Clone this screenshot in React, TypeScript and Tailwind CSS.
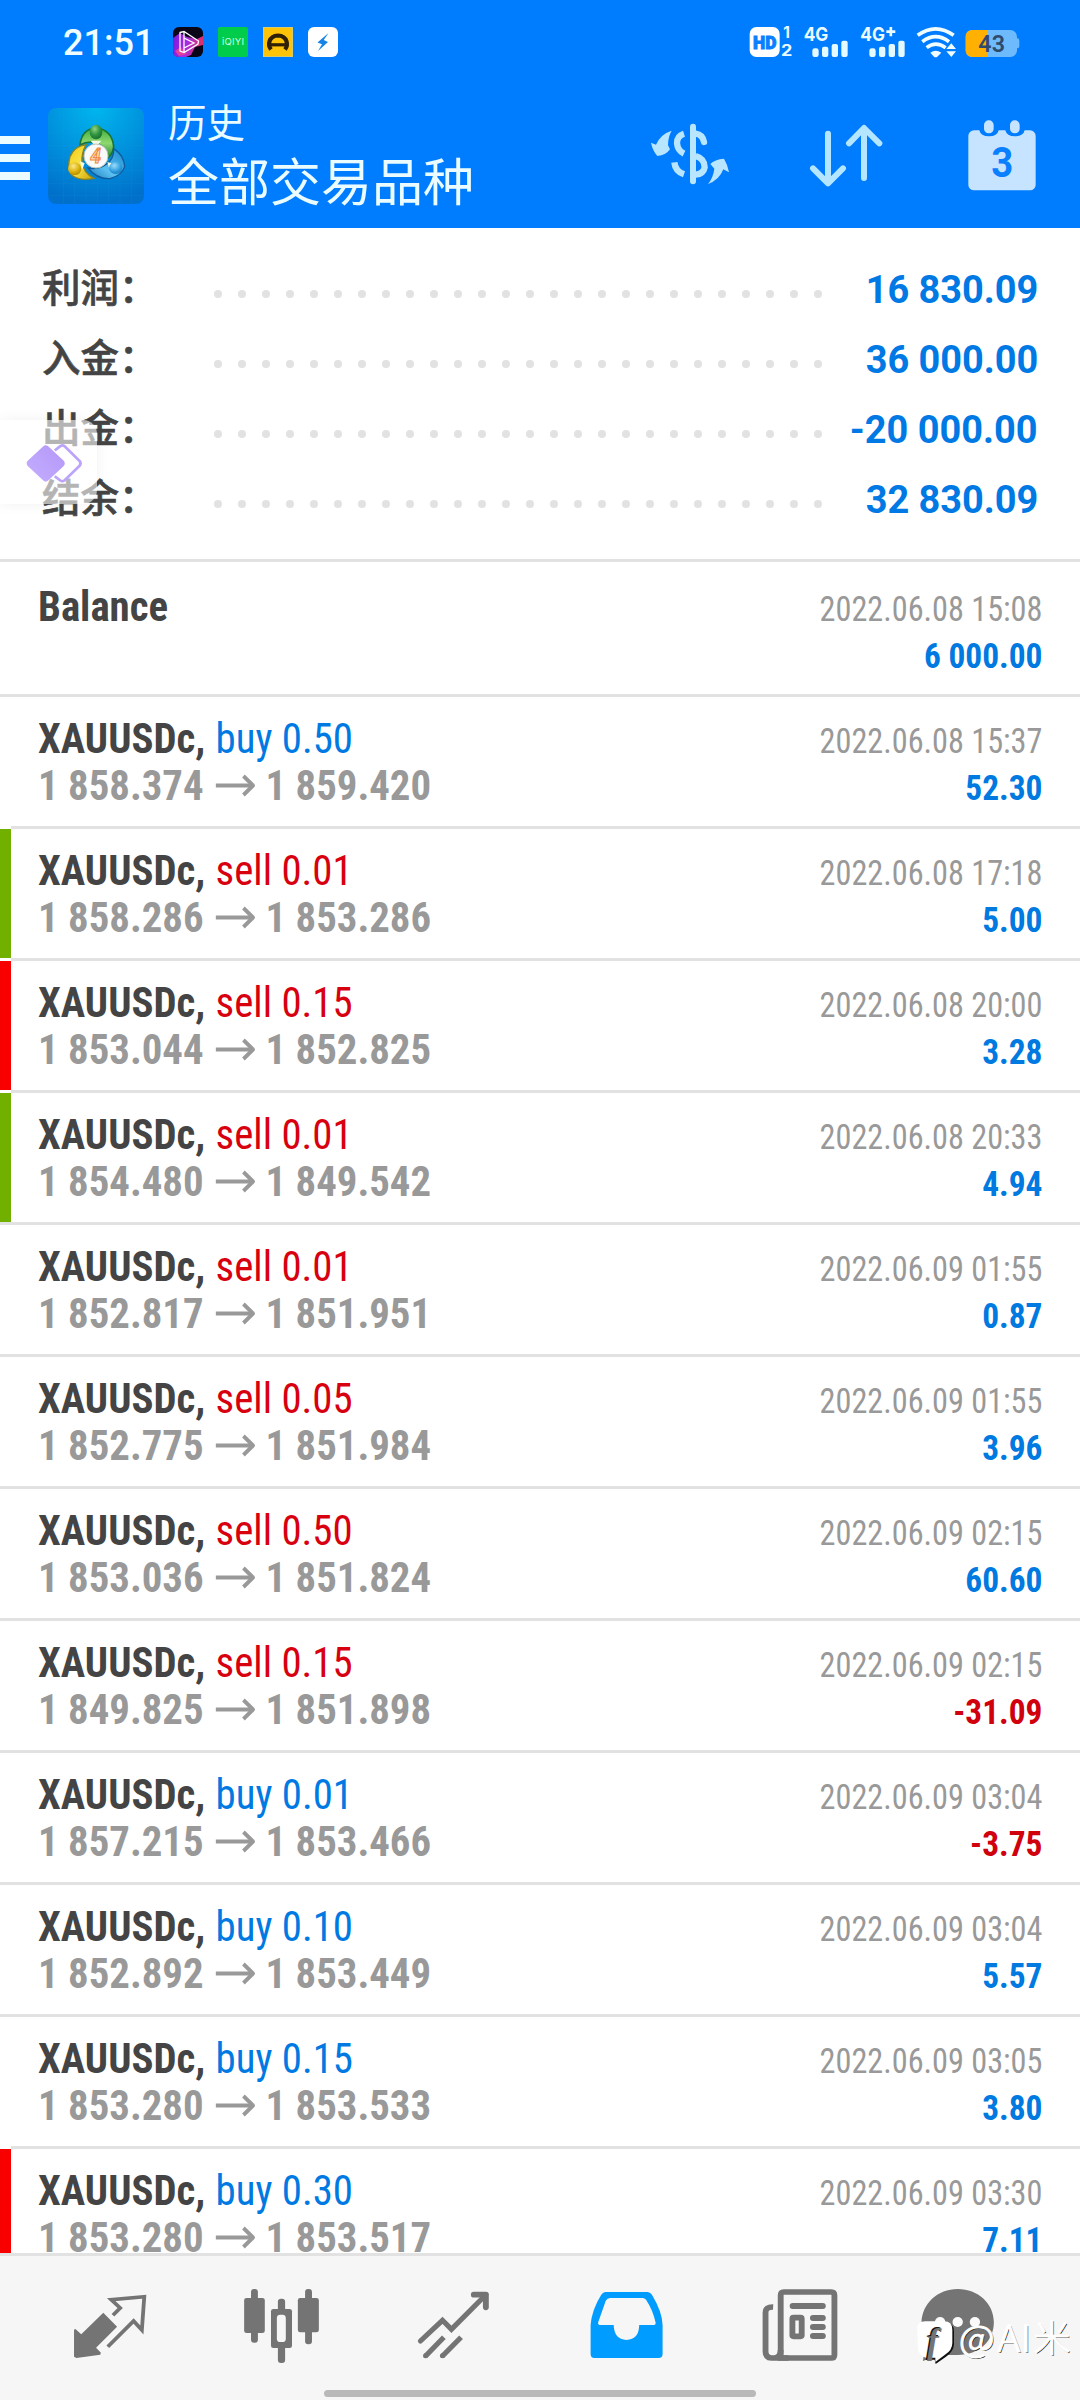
type Marker = 'green' | 'red';

interface Deal {
  symbol: string;
  side?: 'buy' | 'sell';
  volume?: string;
  open?: string;
  close?: string;
  time: string;
  profit: string;
  marker?: Marker;
}

const deal = (
  side: 'buy' | 'sell',
  volume: string,
  open: string,
  close: string,
  time: string,
  profit: string,
  marker?: Marker,
): Deal => ({ symbol: 'XAUUSDc,', side, volume, open, close, time, profit, marker });

const deals: Deal[] = [
  { symbol: 'Balance', time: '2022.06.08 15:08', profit: '6 000.00' },
  deal('buy', '0.50', '1 858.374', '1 859.420', '2022.06.08 15:37', '52.30'),
  deal('sell', '0.01', '1 858.286', '1 853.286', '2022.06.08 17:18', '5.00', 'green'),
  deal('sell', '0.15', '1 853.044', '1 852.825', '2022.06.08 20:00', '3.28', 'red'),
  deal('sell', '0.01', '1 854.480', '1 849.542', '2022.06.08 20:33', '4.94', 'green'),
  deal('sell', '0.01', '1 852.817', '1 851.951', '2022.06.09 01:55', '0.87'),
  deal('sell', '0.05', '1 852.775', '1 851.984', '2022.06.09 01:55', '3.96'),
  deal('sell', '0.50', '1 853.036', '1 851.824', '2022.06.09 02:15', '60.60'),
  deal('sell', '0.15', '1 849.825', '1 851.898', '2022.06.09 02:15', '-31.09'),
  deal('buy', '0.01', '1 857.215', '1 853.466', '2022.06.09 03:04', '-3.75'),
  deal('buy', '0.10', '1 852.892', '1 853.449', '2022.06.09 03:04', '5.57'),
  deal('buy', '0.15', '1 853.280', '1 853.533', '2022.06.09 03:05', '3.80'),
  deal('buy', '0.30', '1 853.280', '1 853.517', '2022.06.09 03:30', '7.11', 'red'),
];

const summary = [
  { label: '利润：', value: '16 830.09' },
  { label: '入金：', value: '36 000.00' },
  { label: '出金：', value: '-20 000.00' },
  { label: '结余：', value: '32 830.09' },
];

function AppBadges() {
  return (
    <div className="flex gap-[15px]">
      <svg className="size-[30px]" viewBox="0 0 30 30">
        <defs>
          <linearGradient id="neon" x1="0" y1="0" x2="1" y2="0.2">
            <stop offset="0" stopColor="#7a18d8" />
            <stop offset="0.5" stopColor="#a42be8" />
            <stop offset="1" stopColor="#e0306a" />
          </linearGradient>
        </defs>
        <rect width="30" height="30" rx="6" fill="#0b0518" />
        <path d="M0 11 7 6 14 10 24 12 30 9V18L22 20 18 28 13 30H6Q0 30 0 24Z" fill="url(#neon)" />
        <path d="M2 24 8 20 14 27 6 29Z" fill="#e2409a" />
        <path d="M7 5.500 11 4.500 25.500 14 25 17 11 25.500 7 24ZM11 4.500V25.500M11 11 21 16 11 21" fill="none" stroke="#fff" strokeWidth="1.300" />
      </svg>
      <svg className="size-[30px]" viewBox="0 0 30 30">
        <rect width="30" height="30" rx="2" fill="#00cc4c" />
        <text x="15" y="18.300" textAnchor="middle" textLength="22" className="fill-[#c9ffe0] font-[Inter] text-[9.500px]">iQIYI</text>
      </svg>
      <svg className="size-[30px]" viewBox="0 0 30 30">
        <rect width="30" height="30" fill="#d8cc68" />
        <rect x="1" y="1" width="28" height="28" fill="#ffc408" />
        <path d="M8 22.500C4.500 18 5.500 9 15 8.500 24.500 9 25.500 18 22 22.500" fill="none" stroke="#2e2108" strokeWidth="4.200" />
        <path d="M7 17.800H23" stroke="#2e2108" strokeWidth="3.200" />
      </svg>
      <svg className="size-[30px]" viewBox="0 0 30 30">
        <rect width="30" height="30" rx="6" fill="#fff" />
        <path d="M20.500 6 9.500 15.500 14 17.200 10 24 20 15 15.700 13Z" fill="#1583e8" />
      </svg>
    </div>
  );
}

function StatusIcons() {
  return (
    <svg className="h-[34px] w-[272px]" viewBox="388 75 816 102">
      <rect x="390" y="81" width="90" height="90" rx="20" fill="#fff" />
      <text x="435" y="147" textAnchor="middle" textLength="70" lengthAdjust="spacingAndGlyphs" className="fill-[#0a7fff] stroke-[#0a7fff] stroke-[3px] font-[Roboto] text-[56px] font-black">HD</text>
      <g className="fill-[#eafcff] font-[Inter] font-bold">
        <text x="491" y="115" className="text-[46px]">1</text>
        <text x="484" y="168" textLength="34" lengthAdjust="spacingAndGlyphs" className="text-[46px]">2</text>
        <text x="552" y="123" textLength="74" lengthAdjust="spacingAndGlyphs" className="text-[56px]">4G</text>
        <text x="722" y="123" textLength="74" lengthAdjust="spacingAndGlyphs" className="text-[56px]">4G</text>
      </g>
      <path d="M800 95H827M813.500 81V109" stroke="#eafcff" strokeWidth="8" />
      <g fill="#e4faff">
        <rect x="578" y="145" width="19" height="26" rx="7" />
        <rect x="607" y="140" width="19" height="31" rx="6" />
        <rect x="636" y="132" width="19" height="39" rx="6" />
        <rect x="665" y="122" width="19" height="49" rx="6" />
        <rect x="749" y="145" width="19" height="26" rx="7" />
        <rect x="778" y="140" width="19" height="31" rx="6" />
        <rect x="807" y="132" width="19" height="39" rx="6" />
        <rect x="836" y="122" width="19" height="49" rx="6" />
      </g>
      <g fill="none" stroke="#f0fdff" strokeWidth="11">
        <path d="M894 106Q948 67 1002 106" />
        <path d="M908 125Q948 95 988 125" />
        <path d="M921 143Q948 122 978 143" />
      </g>
      <path d="M932 158Q948 147 965 158L953 170Q948 174 943 170Z" fill="#f0fdff" />
      <path d="M980 147 995 130 1009 147ZM980 154H1009L995 171Z" fill="#f0fdff" />
      <rect x="1038" y="90" width="154" height="81" rx="20" fill="#6dbbfd" />
      <path d="M1190 115H1193Q1199 115 1199 122V138Q1199 145 1193 145H1190Z" fill="#6dbbfd" />
      <path d="M1105 90H1058Q1038 90 1038 110V151Q1038 171 1058 171H1105Z" fill="#ffb000" />
      <text x="1116" y="155" textAnchor="middle" textLength="80" lengthAdjust="spacingAndGlyphs" className="fill-[#304a6c] font-[Roboto] text-[71px] font-semibold">43</text>
    </svg>
  );
}

function AppLogo() {
  return (
    <svg className="size-24" viewBox="144 24 288 288">
      <defs>
        <radialGradient id="tile" cx="0.5" cy="0" r="1">
          <stop offset="0" stopColor="#00b6ee" />
          <stop offset="0.550" stopColor="#008fdc" />
          <stop offset="1" stopColor="#0070ca" />
        </radialGradient>
        <linearGradient id="leaf" x1="0" y1="0" x2="0" y2="1">
          <stop offset="0" stopColor="#3fae3c" />
          <stop offset="0.500" stopColor="#8fd870" />
          <stop offset="1" stopColor="#1e7c2c" />
        </linearGradient>
        <linearGradient id="gold" x1="0" y1="0" x2="1" y2="1">
          <stop offset="0" stopColor="#f2c90c" />
          <stop offset="0.500" stopColor="#f8e24a" />
          <stop offset="1" stopColor="#c9a200" />
        </linearGradient>
        <linearGradient id="sea" x1="1" y1="0" x2="0" y2="1">
          <stop offset="0" stopColor="#1788cf" />
          <stop offset="0.600" stopColor="#5cc0f0" />
          <stop offset="1" stopColor="#1878bc" />
        </linearGradient>
        <radialGradient id="leafBall" cx="0.400" cy="0.300" r="0.800">
          <stop offset="0" stopColor="#8fd486" />
          <stop offset="0.500" stopColor="#2f9440" />
          <stop offset="1" stopColor="#14662a" />
        </radialGradient>
        <radialGradient id="goldBall" cx="0.400" cy="0.300" r="0.800">
          <stop offset="0" stopColor="#fbe987" />
          <stop offset="0.600" stopColor="#d9ae06" />
          <stop offset="1" stopColor="#a87f00" />
        </radialGradient>
        <radialGradient id="seaBall" cx="0.400" cy="0.300" r="0.800">
          <stop offset="0" stopColor="#9bdcf8" />
          <stop offset="0.600" stopColor="#2e9ee0" />
          <stop offset="1" stopColor="#1270b4" />
        </radialGradient>
      </defs>
      <rect x="144" y="24" width="288" height="288" rx="24" fill="url(#tile)" />
      <path d="M190 24V312M224 24V312M258 24V312M292 24V312M326 24V312M360 24V312M394 24V312M144 60H432M144 98H432M144 136H432M144 174H432M144 212H432M144 250H432M144 286H432" stroke="#29a4e8" strokeOpacity="0.180" strokeWidth="2" />
      <path d="M240 135Q245 86 290 84 336 90 341 140 338 168 318 176 322 140 288 128 262 122 240 135Z" fill="url(#leaf)" stroke="#1a7434" strokeWidth="5" />
      <path d="M258 134Q224 138 210 170 200 205 216 226 240 244 282 235 250 220 246 186 244 160 258 134Z" fill="url(#gold)" stroke="#8c8220" strokeWidth="4" />
      <path d="M341 146Q372 166 374 200 366 226 330 236 290 238 264 204 296 210 320 192 342 176 341 146Z" fill="url(#sea)" stroke="#0f5c9c" strokeWidth="4" />
      <path d="M272 122H304L294 134H282ZM240 184 254 190 246 210ZM322 186 334 190 328 208Z" fill="#f4fbe8" />
      <ellipse cx="288" cy="96" rx="19" ry="22" fill="url(#leafBall)" />
      <ellipse cx="224" cy="206" rx="20" ry="19" fill="url(#goldBall)" />
      <ellipse cx="347" cy="204" rx="20" ry="18" fill="url(#seaBall)" />
      <circle cx="288" cy="168" r="36" fill="#fafafa" stroke="#b9c4ba" strokeWidth="3" />
      <text x="287" y="188" textAnchor="middle" className="fill-[#ffe2c4] stroke-[#f08a3c] stroke-[3px] font-[Roboto] text-[58px] font-bold italic">4</text>
    </svg>
  );
}

function CurrencyIcon() {
  return (
    <svg className="h-[62px] w-20" viewBox="90 369 240 186" fill="#b9e6ff">
      <path d="M155 392Q144 410 144 436L150 448Q138 466 112 468Q98 452 93 428L108 434Q122 402 155 392Z" />
      <path d="M327 517 310 508Q298 540 264 552Q280 532 283 506L271 492Q284 478 312 476Q323 494 327 517Z" />
      <g fill="none" stroke="#b9e6ff" strokeWidth="19">
        <path d="M192 401Q170 408 171 430 173 452 192 461" />
        <path d="M163 487Q166 514 192 523" />
        <path d="M227 401Q248 404 252 426" strokeLinecap="round" />
        <path d="M227 468Q254 476 254 502 250 522 227 524" />
      </g>
      <rect x="210" y="371" width="18" height="182" rx="9" />
    </svg>
  );
}

function SortIcon() {
  return (
    <svg className="h-[64px] w-[74px]" viewBox="567 371 222 192" fill="none" stroke="#b4e6ff" strokeWidth="18" strokeLinecap="round" strokeLinejoin="round">
      <path d="M624 400V549M579 504 624 549 669 504" />
      <path d="M732 533V384M687 429 732 383 778 429" />
    </svg>
  );
}

function CalendarIcon() {
  return (
    <svg className="h-[71px] w-[68px]" viewBox="1044 359 204 213">
      <rect x="1045" y="390" width="202" height="180" rx="17" fill="#c6e4ff" />
      <path d="M1078 385H1136V390Q1132 408 1107 408 1082 408 1078 390ZM1156 385H1214V390Q1210 408 1185 408 1160 408 1156 390Z" fill="#007cff" />
      <rect x="1092" y="360" width="29" height="39" rx="14" fill="#c6e4ff" />
      <rect x="1170" y="360" width="29" height="39" rx="14" fill="#c6e4ff" />
      <text x="1147" y="531" textAnchor="middle" textLength="66" lengthAdjust="spacingAndGlyphs" className="fill-[#0a80ff] font-[Roboto] text-[130px] font-bold">3</text>
    </svg>
  );
}

function Header() {
  return (
    <header className="flex h-[228px] shrink-0 flex-col bg-[#007cff]">
      <div className="flex h-[84px] items-center pr-[59px] pl-[63px]">
        <span className="w-[110px] pt-[2px] font-[Roboto] text-[36px] leading-none font-medium text-[#effdff]">21:51</span>
        <AppBadges />
        <div className="ml-auto">
          <StatusIcons />
        </div>
      </div>
      <div className="flex h-36 items-start">
        <div className="mt-[52px] flex w-12 flex-col gap-[10px]">
          <div className="h-2 w-[30px] bg-[#eafcff]" />
          <div className="h-2 w-[30px] bg-[#eafcff]" />
          <div className="h-2 w-[30px] bg-[#eafcff]" />
        </div>
        <div className="mt-6">
          <AppLogo />
        </div>
        <div className="ml-6 font-['Noto_Sans_CJK_SC',sans-serif] text-[#eafcff]">
          <div className="mt-3 text-[38.500px] leading-[48px]">历史</div>
          <div className="mt-[5px] text-[51px] leading-[60px]">全部交易品种</div>
        </div>
        <div className="ml-auto flex pr-11">
          <div className="mt-[39px] w-[159px]">
            <CurrencyIcon />
          </div>
          <div className="mt-[39.500px] w-[159px]">
            <SortIcon />
          </div>
          <div className="mt-[35.500px]">
            <CalendarIcon />
          </div>
        </div>
      </div>
    </header>
  );
}

function Summary() {
  return (
    <section className="relative h-[334px] shrink-0 border-b-[3px] border-[#e2e2e2] pt-[26px] pr-[42px] pl-[42px]">
      {summary.map((line) => (
        <div key={line.label} className="flex h-[70px] items-start">
          <span className="-mt-1 w-[172px] font-['Noto_Sans_CJK_SC',sans-serif] text-[38.500px] leading-[70px] font-medium text-[#444] [-webkit-text-stroke:0.6px_#444]">
            {line.label}
          </span>
          <div className="mt-9 flex gap-4">
            {Array.from({ length: 26 }, (_, i) => (
              <span key={i} className="size-2 rounded-full bg-[#e2e2e2]" />
            ))}
          </div>
          <span className="ml-auto origin-right scale-x-[0.985] pt-px font-[Roboto] text-[38.500px] leading-[70px] font-bold text-[#0079e4]">{line.value}</span>
        </div>
      ))}
      <FloatingHandle />
    </section>
  );
}

/* Edge handle that floats over the summary. */
function FloatingHandle() {
  return (
    <div className="absolute top-[192px] left-0 h-[84px] w-[97px] rounded-r-[14px] bg-white/60 shadow-[0_0_14px_rgba(0,0,0,0.06)]">
      <svg className="h-full w-full" viewBox="0 570 280 254" preserveAspectRatio="none">
        <defs>
          <linearGradient id="gem" x1="1" y1="0" x2="0" y2="1">
            <stop offset="0" stopColor="#b497f8" />
            <stop offset="1" stopColor="#c4aeff" />
          </linearGradient>
        </defs>
        <path d="M158 662 174 649Q180 645 186 649L230 694Q235 701 230 708L186 753Q180 757 174 753L158 740" fill="none" stroke="#bda4fb" strokeWidth="8" />
        <path d="M125 649Q132 643 139 649L184 693Q190 701 184 709L139 753Q132 760 125 753L80 709Q74 701 80 693Z" fill="url(#gem)" />
      </svg>
    </div>
  );
}

function Arrow() {
  return (
    <svg className="h-[23px] w-[42px] shrink-0" viewBox="0 0 42 23" fill="none" stroke="#999" strokeWidth="4">
      <path d="M0 11.500H39" />
      <path d="M29 2 39 11.500 29 21" strokeLinejoin="round" />
    </svg>
  );
}

function DealRow({ item, first }: { item: Deal; first: boolean }) {
  const inset = item.marker ? 'ml-[11px]' : '';
  const sideColor = item.side === 'sell' ? 'text-[#d8000f]' : 'text-[#007ae2]';
  const profitColor = item.profit.startsWith('-') ? 'text-[#d0000c]' : 'text-[#0079e0]';
  return (
    <div className="shrink-0">
      {!first && <div className={`h-[3px] bg-[#e2e2e2] ${inset}`} />}
      <div className={`flex ${first ? 'h-[132px] pt-[3px]' : 'h-[129px]'}`}>
        <div className={`w-[11px] shrink-0 ${item.marker === 'green' ? 'bg-[#72b000]' : item.marker === 'red' ? 'bg-[#f80000]' : ''}`} />
        <div className="flex flex-1 justify-between pr-[38px] pl-[27px] font-['Roboto_Condensed',Roboto,sans-serif]">
          <div className="origin-left scale-x-[0.96] pt-[18px] text-[42.500px] leading-[47px]">
            <div className="flex">
              <span className="w-[185px] font-bold text-[#444]">{item.symbol}</span>
              {item.side && (
                <span className={sideColor}>
                  {item.side} {item.volume}
                </span>
              )}
            </div>
            {item.open && (
              <div className="flex items-center font-bold text-[#999]">
                <span className="w-[185px]">{item.open}</span>
                <Arrow />
                <span className="pl-[10px]">{item.close}</span>
              </div>
            )}
          </div>
          <div className="pt-[21px] text-right text-[35.500px] leading-[47px]">
            <div className="origin-right scale-x-[0.908] text-[#999]">{item.time}</div>
            <div className={`origin-right scale-x-[0.94] font-bold ${profitColor}`}>{item.profit}</div>
          </div>
        </div>
      </div>
    </div>
  );
}

function QuotesIcon() {
  return (
    <svg className="h-[130px] w-[172px]" viewBox="69.700 378 499.500 390" preserveAspectRatio="none">
      <path d="M300 548 340 590 279 653 293 668 291 674 222 684 215 680V599L219 597 236 613Z" fill="#747474" />
      <path d="M313 650 388 573 412 600 419 500 323 509 349 534 328 556" fill="none" stroke="#747474" strokeWidth="11" />
    </svg>
  );
}

function ChartIcon() {
  return (
    <svg className="h-[130px] w-[172px]" viewBox="569.200 378 499.500 390" preserveAspectRatio="none" fill="#747474">
      <rect x="729" y="477" width="20" height="161" rx="9" />
      <rect x="709" y="504" width="60" height="105" rx="7" />
      <rect x="886" y="477" width="20" height="166" rx="9" />
      <rect x="865" y="504" width="61" height="103" rx="7" />
      <rect x="807" y="506" width="21" height="193" rx="9" />
      <rect x="787" y="537" width="61" height="117" rx="7" />
      <rect x="804" y="554" width="26" height="82" rx="10" fill="#f6f6f6" />
    </svg>
  );
}

function TradeIcon() {
  return (
    <svg className="h-[130px] w-[172px]" viewBox="1068.700 378 499.500 390" preserveAspectRatio="none" fill="none" stroke="#747474" strokeWidth="15">
      <path d="M1221 633 1285 571 1311 598 1411 494" strokeLinejoin="miter" strokeLinecap="round" />
      <path d="M1376 494H1411V532" strokeLinecap="round" strokeLinejoin="round" strokeWidth="17" />
      <path d="M1289 622 1236 678M1339 622 1285 678" />
      <path d="M1236 677H1236.100M1285 677H1285.100" strokeLinecap="round" />
    </svg>
  );
}

function HistoryIcon() {
  return (
    <svg className="h-[130px] w-[172px]" viewBox="0 378 499.500 390" preserveAspectRatio="none">
      <path d="M190 486H312Q320 486 325 494Q355 545 356 585V672Q356 684 344 684H158Q147 684 147 672V585Q150 540 178 494Q183 486 190 486Z" fill="#009cff" />
      <path d="M204 504H298Q304 504 308 509Q328 540 336 579Q336 585 331 585H288Q288 628 251 630Q215 628 214 585H174Q167 584 169 577L191 512Q195 504 204 504Z" fill="#f6f6f6" />
    </svg>
  );
}

function NewsIcon() {
  return (
    <svg className="h-[130px] w-[172px]" viewBox="499.500 378 499.500 390" preserveAspectRatio="none" fill="none" stroke="#747474" strokeWidth="17">
      <path d="M677 531Q655 530 655 548V664Q655 684 672 684H846Q855 684 855 674V496Q855 486 846 486H708Q699 486 699 496V660Q699 684 680 684" />
      <path d="M734 528H821M793 564H821M793 591H821M793 618H821" strokeLinecap="round" strokeWidth="18" />
      <rect x="733" y="563" width="27" height="56" rx="3" />
      <path d="M699 660V684H722" />
    </svg>
  );
}

function ChatIcon() {
  return (
    <svg className="h-[130px] w-[172px]" viewBox="999 378 499.500 390" preserveAspectRatio="none">
      <path d="M1213 477C1272 477 1318 520 1318 577 1318 632 1276 675 1213 675H1160L1112 693 1120 640Q1108 615 1108 577C1110 520 1155 477 1213 477Z" fill="#747474" />
      <circle cx="1162" cy="576" r="15" fill="#fafafa" />
      <circle cx="1213" cy="576" r="15" fill="#fafafa" />
      <circle cx="1263" cy="576" r="15" fill="#fafafa" />
    </svg>
  );
}

function Watermark() {
  return (
    <svg className="absolute top-[60px] left-[914px] h-[50px] w-[166px]" viewBox="42 107 498 150">
      <path d="M86 128H136Q162 128 162 153V192Q161 214 138 229L107 251 104 238H88Z" fill="#111" />
      <path d="M52 142Q52 124 76 123H132Q157 123 157 148V188Q157 210 134 224L106 245 106 232H78Q58 228 54 206Z" fill="#fff" />
      <text x="77" y="214" className="fill-[#111] font-['Liberation_Serif'] text-[106px] font-bold italic">f</text>
      <text x="81" y="218" className="fill-[#747474] font-['Liberation_Serif'] text-[106px] font-bold italic">f</text>
      <g className="font-['Noto_Sans_CJK_SC',sans-serif] text-[112px] font-light">
        <g className="fill-[#222]">
          <text x="179" y="219" textLength="108" lengthAdjust="spacingAndGlyphs">@</text>
          <text x="295" y="219" textLength="102" lengthAdjust="spacingAndGlyphs">AI</text>
          <text x="403" y="217">米</text>
        </g>
        <g className="fill-white stroke-white stroke-[3px]">
          <text x="176" y="216" textLength="108" lengthAdjust="spacingAndGlyphs">@</text>
          <text x="292" y="216" textLength="102" lengthAdjust="spacingAndGlyphs">AI</text>
          <text x="400" y="214">米</text>
        </g>
      </g>
    </svg>
  );
}

function BottomNav() {
  return (
    <nav className="relative h-[147px] shrink-0 border-t-[3px] border-[#e2e2e2] bg-[#f6f6f6]">
      <div className="flex px-6">
        <QuotesIcon />
        <ChartIcon />
        <TradeIcon />
        <HistoryIcon />
        <NewsIcon />
        <ChatIcon />
      </div>
      <div className="mx-auto mt-1 h-[7px] w-[432px] rounded-full bg-[#b9b9b9]" />
      <Watermark />
    </nav>
  );
}

export default function App() {
  return (
    <div className="flex h-[2400px] w-[1080px] flex-col overflow-hidden bg-white">
      <Header />
      <Summary />
      <main className="flex min-h-0 flex-1 flex-col overflow-hidden">
        {deals.map((item, index) => (
          <DealRow key={index} item={item} first={index === 0} />
        ))}
      </main>
      <BottomNav />
    </div>
  );
}
